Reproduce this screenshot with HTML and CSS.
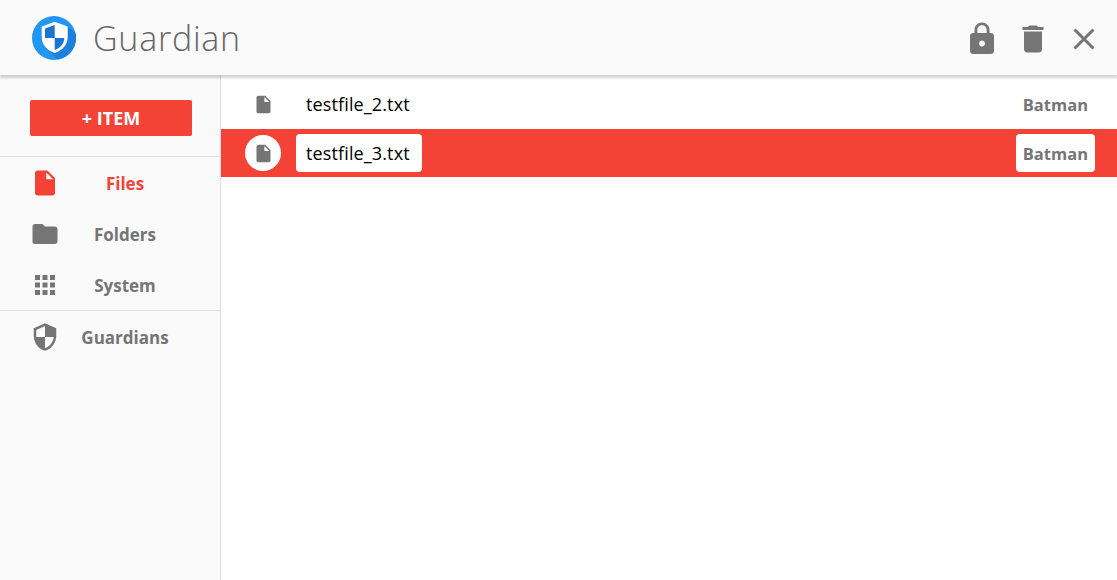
FILE: index.html
```html
<!DOCTYPE html>
<html>
<head>
    <title>Guardian</title>
    <link rel="stylesheet" href="styles.css">
</head>
<body>
    <div class="header">
        <svg class="logo" width="46" height="46" viewBox="0 0 46 46">
            <circle cx="23" cy="23" r="22" fill="#2196f3"/>
            <path d="M35 10 L44.500 18 A22 22 0 0 1 27 44.600 L18 36 Z" fill="#1c80dc"/>
            <path d="M23.700 6.700 L36.700 11.500 V22 C36.700 30 31 35.500 23.700 38 C16.400 35.500 10.700 30 10.700 22 V11.500 Z" fill="#fff"/>
            <path d="M23.700 10 V23 H14 V13.500 Z M23.700 23 H33.300 C33 29 29 33 23.700 35 Z" fill="#1976d2"/>
        </svg>
        <div class="title">Guardian</div>
        <div class="actions">
            <svg width="36" height="36" viewBox="0 0 24 24"><path d="M18 8h-1V6c0-2.760-2.240-5-5-5S7 3.240 7 6v2H6c-1.100 0-2 .9-2 2v10c0 1.100.9 2 2 2h12c1.100 0 2-.9 2-2V10c0-1.100-.9-2-2-2zm-6 9c-1.100 0-2-.9-2-2s.9-2 2-2 2 .9 2 2-.9 2-2 2zm3.100-9H8.900V6c0-1.710 1.390-3.100 3.100-3.100s3.100 1.390 3.100 3.100v2z"/></svg>
            <svg width="36" height="36" viewBox="0 0 24 24"><path d="M6 19c0 1.100.9 2 2 2h8c1.100 0 2-.9 2-2V7H6v12zM19 4h-3.500l-1-1h-5l-1 1H5v2h14V4z"/></svg>
            <svg width="36" height="36" viewBox="0 0 24 24"><path d="M19 6.410 17.590 5 12 10.590 6.410 5 5 6.410 10.590 12 5 17.590 6.410 19 12 13.410 17.590 19 19 17.590 13.410 12z"/></svg>
        </div>
    </div>
    <div class="main">
        <div class="sidebar">
            <div class="add-wrap">
                <button class="add-button">+ ITEM</button>
            </div>
            <div class="nav-group">
                <div class="nav-item active">
                    <svg width="30" height="30" viewBox="0 0 24 24"><path d="M6 2c-1.100 0-2 .9-2 2v16c0 1.100.9 2 2 2h12c1.100 0 2-.9 2-2V8l-6-6H6zm7 7V3.500L18.500 9H13z"/></svg>
                    <span>Files</span>
                </div>
                <div class="nav-item">
                    <svg width="30" height="30" viewBox="0 0 24 24"><path d="M10 4H4c-1.100 0-2 .9-2 2v12c0 1.100.9 2 2 2h16c1.100 0 2-.9 2-2V8c0-1.100-.9-2-2-2h-8l-2-2z"/></svg>
                    <span>Folders</span>
                </div>
                <div class="nav-item">
                    <svg width="30" height="30" viewBox="0 0 24 24"><path d="M4 8h4V4H4v4zm6 12h4v-4h-4v4zm-6 0h4v-4H4v4zm0-6h4v-4H4v4zm6 0h4v-4h-4v4zm6-10v4h4V4h-4zm-6 4h4V4h-4v4zm6 6h4v-4h-4v4zm0 6h4v-4h-4v4z"/></svg>
                    <span>System</span>
                </div>
            </div>
            <div class="nav-item">
                <svg width="30" height="30" viewBox="0 0 24 24"><path d="M12 1 3 5v6c0 5.550 3.840 10.740 9 12 5.160-1.260 9-6.450 9-12V5l-9-4zm0 10.990h7c-.53 4.120-3.280 7.790-7 8.940V12H5V6.300l7-3.110v8.800z"/></svg>
                <span>Guardians</span>
            </div>
        </div>
        <div class="list">
            <div class="row">
                <div class="row-icon">
                    <svg width="21" height="21" viewBox="0 0 24 24"><path d="M6 2c-1.100 0-2 .9-2 2v16c0 1.100.9 2 2 2h12c1.100 0 2-.9 2-2V8l-6-6H6zm7 7V3.500L18.500 9H13z"/></svg>
                </div>
                <div class="row-name">testfile_2.txt</div>
                <div class="row-owner">Batman</div>
            </div>
            <div class="row selected">
                <div class="row-icon">
                    <svg width="21" height="21" viewBox="0 0 24 24"><path d="M6 2c-1.100 0-2 .9-2 2v16c0 1.100.9 2 2 2h12c1.100 0 2-.9 2-2V8l-6-6H6zm7 7V3.500L18.500 9H13z"/></svg>
                </div>
                <div class="row-name">testfile_3.txt</div>
                <div class="row-owner">Batman</div>
            </div>
        </div>
    </div>
</body>
</html>
```

FILE: styles.css
```css
html, body {
    height: 100%;
}
body {
    margin: 0;
    display: flex;
    flex-direction: column;
    overflow: hidden;
    background: #fff;
    font-family: "Open Sans", sans-serif;
    color: #757575;
}
svg {
    display: block;
    fill: #757575;
    flex-shrink: 0;
}
.header {
    position: relative;
    z-index: 1;
    height: 75px;
    display: flex;
    align-items: center;
    padding: 0 15px 0 31px;
    background: #fafafa;
    box-shadow: 0 3px 2px rgba(0, 0, 0, 0.17);
}
.logo {
    margin-right: 16px;
}
.title {
    font-size: 34px;
    font-weight: 300;
    letter-spacing: 0.75px;
    line-height: 46px;
    padding-top: 1px;
    color: #666;
}
.actions {
    margin-left: auto;
    padding-top: 3px;
    display: flex;
    gap: 15px;
}
.main {
    flex: 1;
    display: flex;
    min-height: 0;
}
.sidebar {
    width: 220px;
    flex-shrink: 0;
    background: #fafafa;
    border-right: 1px solid #e0e0e0;
}
.add-wrap {
    height: 81px;
    box-sizing: border-box;
    padding: 25px 28px 0 30px;
}
.add-button {
    display: block;
    width: 162px;
    height: 36px;
    padding: 0;
    border: 0;
    border-radius: 2px;
    background: #f44336;
    color: #fff;
    font-family: inherit;
    font-size: 18px;
    font-weight: 700;
}
.nav-group {
    border-top: 1px solid #e0e0e0;
    border-bottom: 1px solid #e0e0e0;
}
.nav-item {
    height: 51px;
    display: flex;
    align-items: center;
    padding-left: 30px;
    font-size: 17px;
    font-weight: 700;
}
.nav-item span {
    width: 130px;
    padding-top: 2px;
    text-align: center;
}
.nav-item.active {
    color: #f44336;
}
.nav-item.active svg {
    fill: #f44336;
}
.list {
    flex: 1;
    padding-top: 5px;
}
.row {
    height: 48px;
    margin-bottom: 1px;
    display: flex;
    align-items: center;
    padding: 0 22px 0 24px;
}
.row-icon {
    width: 36px;
    height: 36px;
    border-radius: 50%;
    display: flex;
    align-items: center;
    justify-content: center;
    margin-right: 15px;
}
.row-name {
    padding: 0 12px 0 10px;
    border-radius: 4px;
    font-size: 18px;
    line-height: 38px;
    letter-spacing: 0.13px;
    color: #000;
}
.row-owner {
    margin-left: auto;
    padding: 1px 7px 0;
    border-radius: 4px;
    font-size: 16.500px;
    line-height: 37px;
    font-weight: 700;
}
.row.selected {
    background: #f44336;
}
.selected .row-icon, .selected .row-name, .selected .row-owner {
    background: #fff;
}
```
